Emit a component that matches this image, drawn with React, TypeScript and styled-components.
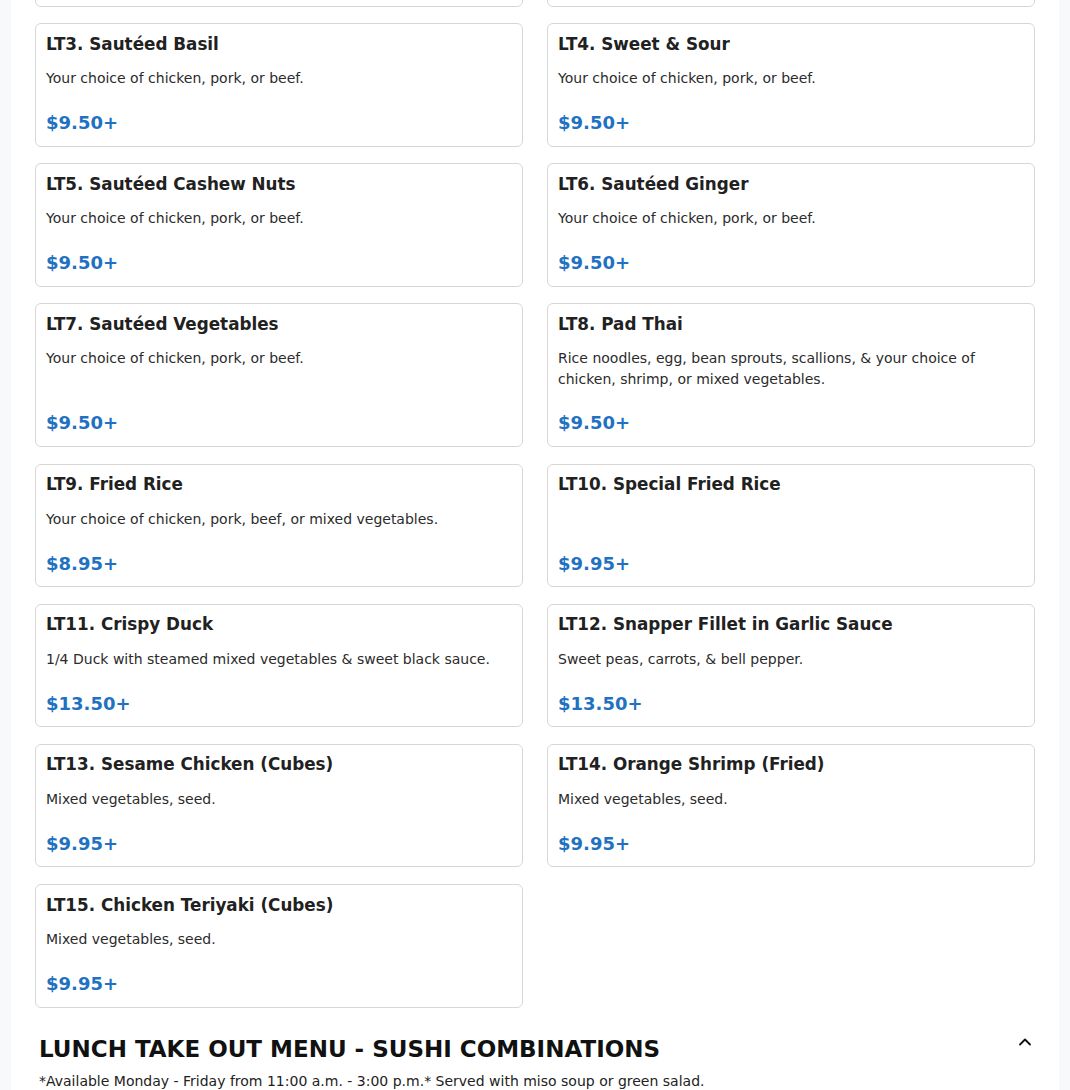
import React from "react";
import styled, { createGlobalStyle } from "styled-components";
import { ChevronUp } from "lucide-react";

const GlobalStyle = createGlobalStyle`
  html, body {
    margin: 0;
    padding: 0;
    background: #f8f9fa;
    font-family: "DejaVu Sans", "Noto Sans", sans-serif;
    color: #212529;
    overflow: hidden;
  }
  * { box-sizing: border-box; }
`;

const Panel = styled.main`
  width: 1048px;
  margin: -141px auto 0;
  background: #ffffff;
  padding: 24px 24px 40px;
  display: flex;
  flex-direction: column;
  gap: 22.5px;
`;

const Grid = styled.section`
  display: grid;
  grid-template-columns: 1fr 1fr;
  column-gap: 24px;
  row-gap: 16.67px;
`;

const Card = styled.article`
  display: flex;
  flex-direction: column;
  border: 1px solid #d6d6d6;
  border-radius: 6px;
  padding: 9.5px 10px;
  background: #fff;
`;

const Title = styled.h3`
  margin: 0;
  font-size: 16.8px;
  line-height: 21px;
  font-weight: 700;
  color: #212121;
`;

const Desc = styled.p`
  margin: 13.5px 0 0;
  font-size: 14px;
  line-height: 21px;
  color: #2b2b2b;
  min-height: 22px;
`;

const Price = styled.div`
  margin-top: auto;
  padding-top: 19px;
  font-size: 18px;
  line-height: 27px;
  font-weight: 700;
  color: #1f72c1;
`;

const SectionHeader = styled.section`
  display: flex;
  justify-content: space-between;
  align-items: flex-start;
  padding-left: 4px;
`;

const HeaderText = styled.div`
  display: flex;
  flex-direction: column;
  padding-top: 5px;
`;

const Heading = styled.h2`
  margin: 0;
  font-size: 23px;
  line-height: 28px;
  font-weight: 700;
  color: #111;
`;

const Note = styled.p`
  margin: 8px 0 0;
  font-size: 14px;
  line-height: 21px;
  color: #222;
`;

const Toggle = styled.button`
  width: 20px;
  height: 24px;
  padding: 0;
  border: none;
  background: transparent;
  display: flex;
  align-items: center;
  justify-content: center;
  color: #111;
`;

type Item = { code: string; name: string; desc?: string; price: string };

const items: Item[] = [
  { code: "LT1", name: "Sautéed Broccoli", desc: "Your choice of chicken, pork, or beef.", price: "$9.50+" },
  { code: "LT2", name: "Sautéed Garlic", desc: "Your choice of chicken, pork, or beef.", price: "$9.50+" },
  { code: "LT3", name: "Sautéed Basil", desc: "Your choice of chicken, pork, or beef.", price: "$9.50+" },
  { code: "LT4", name: "Sweet & Sour", desc: "Your choice of chicken, pork, or beef.", price: "$9.50+" },
  { code: "LT5", name: "Sautéed Cashew Nuts", desc: "Your choice of chicken, pork, or beef.", price: "$9.50+" },
  { code: "LT6", name: "Sautéed Ginger", desc: "Your choice of chicken, pork, or beef.", price: "$9.50+" },
  { code: "LT7", name: "Sautéed Vegetables", desc: "Your choice of chicken, pork, or beef.", price: "$9.50+" },
  { code: "LT8", name: "Pad Thai", desc: "Rice noodles, egg, bean sprouts, scallions, & your choice of chicken, shrimp, or mixed vegetables.", price: "$9.50+" },
  { code: "LT9", name: "Fried Rice", desc: "Your choice of chicken, pork, beef, or mixed vegetables.", price: "$8.95+" },
  { code: "LT10", name: "Special Fried Rice", price: "$9.95+" },
  { code: "LT11", name: "Crispy Duck", desc: "1/4 Duck with steamed mixed vegetables & sweet black sauce.", price: "$13.50+" },
  { code: "LT12", name: "Snapper Fillet in Garlic Sauce", desc: "Sweet peas, carrots, & bell pepper.", price: "$13.50+" },
  { code: "LT13", name: "Sesame Chicken (Cubes)", desc: "Mixed vegetables, seed.", price: "$9.95+" },
  { code: "LT14", name: "Orange Shrimp (Fried)", desc: "Mixed vegetables, seed.", price: "$9.95+" },
  { code: "LT15", name: "Chicken Teriyaki (Cubes)", desc: "Mixed vegetables, seed.", price: "$9.95+" },
];

export default function App() {
  return (
    <>
      <GlobalStyle />
      <Panel>
        <Grid>
          {items.map((it) => (
            <Card key={it.code}>
              <Title>
                {it.code}. {it.name}
              </Title>
              {it.desc ? <Desc>{it.desc}</Desc> : null}
              <Price>{it.price}</Price>
            </Card>
          ))}
        </Grid>
        <SectionHeader>
          <HeaderText>
            <Heading>LUNCH TAKE OUT MENU - SUSHI COMBINATIONS</Heading>
            <Note>
              *Available Monday - Friday from 11:00 a.m. - 3:00 p.m.* Served with miso soup or green salad.
            </Note>
          </HeaderText>
          <Toggle aria-label="Collapse section">
            <ChevronUp size={22} strokeWidth={2.2} />
          </Toggle>
        </SectionHeader>
      </Panel>
    </>
  );
}
